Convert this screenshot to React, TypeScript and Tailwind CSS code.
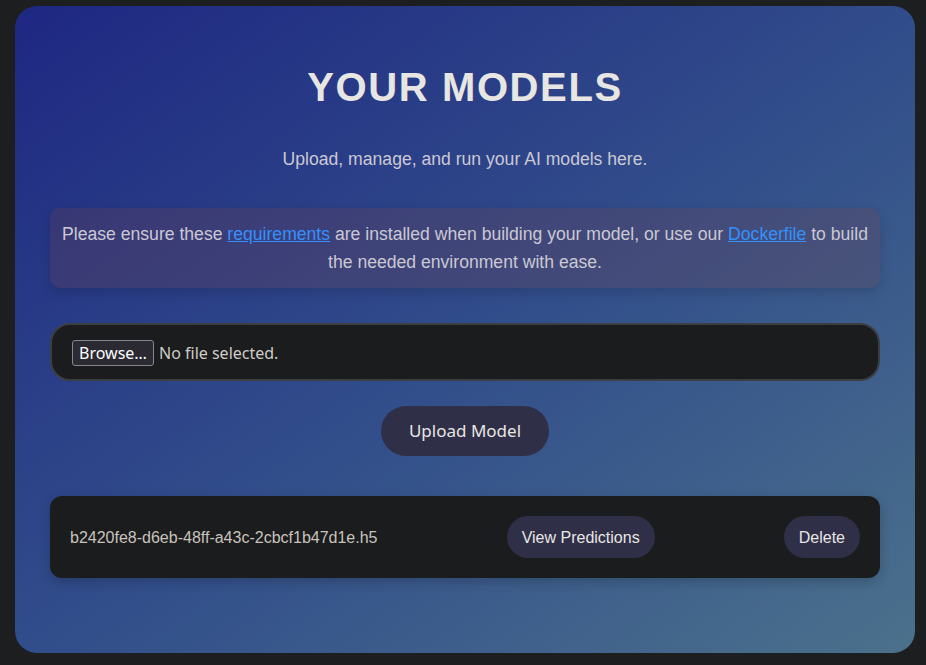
export default function App() {
  return (
    <div className="min-h-[665px] bg-[#1c1e1f] pt-[6px] pl-[15px] font-['Liberation_Sans',Arial,sans-serif]">
      <div className="w-[900px] h-[647px] rounded-[22px] bg-[linear-gradient(145deg,#1e2782_0%,#33508b_55%,#4b718c_100%)] px-[35px] pt-[57px] flex flex-col items-center">
        <h1 className="text-[40px] leading-[48px] font-bold tracking-[1.6px] text-[#e8e6e3]">YOUR MODELS</h1>

        <p className="mt-[34px] text-[17.6px] leading-[28px] text-[#cbc8d4]">
          Upload, manage, and run your AI models here.
        </p>

        {/* requirements notice */}
        <div className="mt-[35px] w-full rounded-[10px] bg-[rgba(114,64,70,0.25)] px-[8px] py-3 text-center text-[17.6px] leading-[28px] text-[#cbc8d4] shadow-[0_4px_12px_rgba(0,0,0,0.15)]">
          Please ensure these{' '}
          <a href="#" className="text-[#3391ff] underline">requirements</a>{' '}
          are installed when building your model, or use our{' '}
          <a href="#" className="text-[#3391ff] underline">Dockerfile</a>{' '}
          to build the needed environment with ease.
        </div>

        {/* file picker */}
        <div className="mt-[35px] w-full h-[58px] rounded-[20px] border-2 border-[#3b3f42] bg-[#1b1c1e] px-5 pt-[1px] flex items-center gap-[5px] font-['Noto_Sans',sans-serif] text-[16px]">
          <span className="h-[26px] w-[82px] flex items-center justify-center rounded-[3px] border border-[#85858d] bg-[#2b2a33] text-[#fbfbfe]">
            Browse…
          </span>
          <span className="text-[#cfccc6]">No file selected.</span>
        </div>

        <button className="mt-[25px] h-[50px] w-[168px] rounded-full bg-[#302f48] font-['Noto_Sans',sans-serif] text-[17px] text-[#e8e6e3]">
          Upload Model
        </button>

        {/* model list */}
        <div className="mt-[40px] w-full h-[82px] rounded-[12px] bg-[#1b1c1e] px-5 flex items-center justify-between shadow-[0_4px_12px_rgba(0,0,0,0.2)]">
          <span className="pt-[2px] text-[16px] text-[#c8c3bc]">b2420fe8-d6eb-48ff-a43c-2cbcf1b47d1e.h5</span>
          <button className="h-[42px] px-[15px] pt-[2px] rounded-full bg-[#302f48] text-[16px] text-[#e8e6e3]">
            View Predictions
          </button>
          <button className="h-[42px] px-[15px] pt-[2px] rounded-full bg-[#302f48] text-[16px] text-[#e8e6e3]">
            Delete
          </button>
        </div>
      </div>
    </div>
  )
}
